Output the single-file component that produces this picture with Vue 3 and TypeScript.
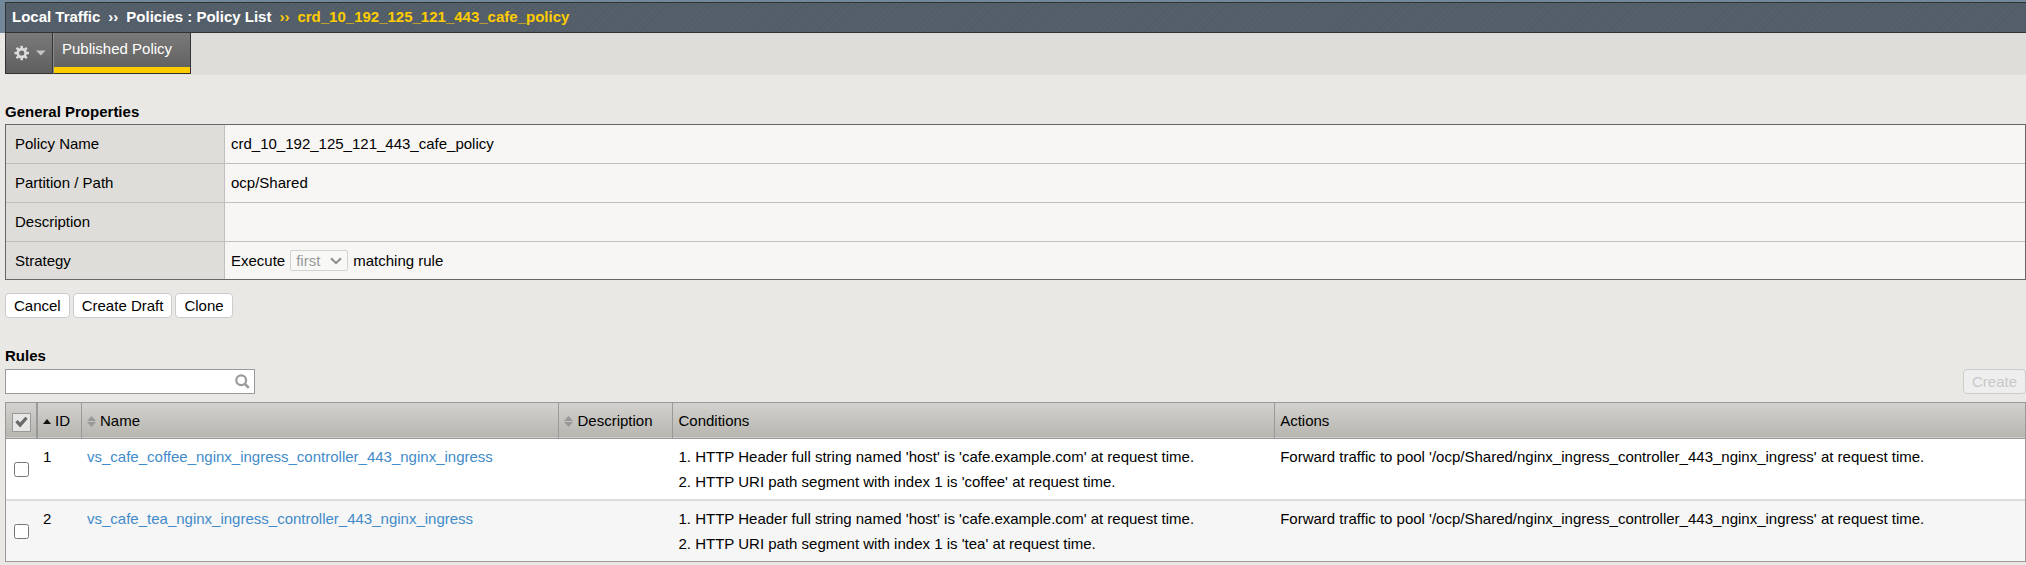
<script setup lang="ts">
import { ref } from 'vue'

interface Rule {
  id: number
  name: string
  conditions: string[]
  action: string
}

const policy = 'crd_10_192_125_121_443_cafe_policy'
const strategy = ref('first')
const filter = ref('')
const selected = ref<number[]>([])

const rules: Rule[] = [
  {
    id: 1,
    name: 'vs_cafe_coffee_nginx_ingress_controller_443_nginx_ingress',
    conditions: [
      "1. HTTP Header full string named 'host' is 'cafe.example.com' at request time.",
      "2. HTTP URI path segment with index 1 is 'coffee' at request time.",
    ],
    action: "Forward traffic to pool '/ocp/Shared/nginx_ingress_controller_443_nginx_ingress' at request time.",
  },
  {
    id: 2,
    name: 'vs_cafe_tea_nginx_ingress_controller_443_nginx_ingress',
    conditions: [
      "1. HTTP Header full string named 'host' is 'cafe.example.com' at request time.",
      "2. HTTP URI path segment with index 1 is 'tea' at request time.",
    ],
    action: "Forward traffic to pool '/ocp/Shared/nginx_ingress_controller_443_nginx_ingress' at request time.",
  },
]

function toggleAll(): void {
  selected.value = selected.value.length === rules.length ? [] : rules.map((r) => r.id)
}
</script>

<template>
  <div class="page">
    <header class="top">
      <nav class="crumbs" aria-label="Breadcrumb">
        <span>Local Traffic</span>
        <span>››</span>
        <span>Policies : Policy List</span>
        <span class="current">››</span>
        <span class="current">{{ policy }}</span>
      </nav>
    </header>

    <div class="tabbar">
      <button class="gear" type="button" aria-label="Preferences">
        <svg width="16" height="16" viewBox="0 0 16 16" aria-hidden="true">
          <g fill="#dcdcdc">
            <rect v-for="a in [0, 45, 90, 135]" :key="a" x="6.7" y="0.4" width="2.6" height="15.2" rx="0.6" :transform="`rotate(${a} 8 8)`" />
          </g>
          <circle cx="8" cy="8" r="4.1" fill="#6b6b6b" stroke="#dcdcdc" stroke-width="2.8" />
        </svg>
        <svg width="10" height="6" viewBox="0 0 10 6" aria-hidden="true"><path d="M0 0.5h10L5 5.7z" fill="#c4c4c4" /></svg>
      </button>
      <a class="tab" href="#">Published Policy</a>
    </div>

    <main>
      <h2 class="general">General Properties</h2>
      <table class="props">
        <colgroup><col class="label-col"><col></colgroup>
        <tbody>
          <tr><th scope="row">Policy Name</th><td>{{ policy }}</td></tr>
          <tr><th scope="row">Partition / Path</th><td>ocp/Shared</td></tr>
          <tr><th scope="row">Description</th><td></td></tr>
          <tr>
            <th scope="row"><label for="strategy">Strategy</label></th>
            <td>
              <div class="strategy">
                <span>Execute</span>
                <span class="select">
                  <select id="strategy" v-model="strategy" disabled>
                    <option value="first">first</option>
                  </select>
                  <svg width="12" height="8" viewBox="0 0 12 8" aria-hidden="true"><path d="M1 1.2l5 5 5-5" fill="none" stroke="#8c8c8c" stroke-width="2" /></svg>
                </span>
                <span>matching rule</span>
              </div>
            </td>
          </tr>
        </tbody>
      </table>

      <div class="buttons">
        <button class="btn" type="button">Cancel</button>
        <button class="btn" type="button">Create Draft</button>
        <button class="btn" type="button">Clone</button>
      </div>

      <h2 class="rules-title">Rules</h2>
      <div class="tools">
        <div class="search">
          <input v-model="filter" type="text" aria-label="Filter rules">
          <svg width="15" height="15" viewBox="0 0 15 15" aria-hidden="true">
            <circle cx="6.2" cy="6.2" r="4.9" fill="none" stroke="#9b9b9b" stroke-width="2.2" />
            <path d="M9.8 9.8l4 4" stroke="#9b9b9b" stroke-width="2.6" />
          </svg>
        </div>
        <button class="btn" type="button" disabled>Create</button>
      </div>

      <table class="rules">
        <colgroup>
          <col class="c-check"><col class="c-id"><col class="c-name"><col class="c-desc"><col class="c-cond"><col>
        </colgroup>
        <thead>
          <tr>
            <th class="check" scope="col">
              <button class="all" type="button" aria-label="Select all rules" @click="toggleAll">
                <svg width="13" height="12" viewBox="0 0 13 12" aria-hidden="true"><path d="M0.3 6.3L2.6 4l2.5 2.4L10.4 0.8l2.3 2L5.2 11.4z" fill="#686868" /></svg>
              </button>
            </th>
            <th scope="col">
              <span class="head"><svg width="8" height="7" viewBox="0 0 8 7" aria-hidden="true"><path d="M4 2l4 5H0z" fill="#111" /></svg>ID</span>
            </th>
            <th v-for="h in ['Name', 'Description']" :key="h" scope="col">
              <span class="head"><svg width="9" height="13" viewBox="0 0 9 13" aria-hidden="true"><path d="M4.5 2L9 7H0zM0 8h9L4.5 13z" fill="#999" /></svg>{{ h }}</span>
            </th>
            <th scope="col">Conditions</th>
            <th scope="col">Actions</th>
          </tr>
        </thead>
        <tbody>
          <tr v-for="r in rules" :key="r.id">
            <td class="check"><input v-model="selected" type="checkbox" :value="r.id" :aria-label="`Select rule ${r.id}`"></td>
            <td>{{ r.id }}</td>
            <td><a href="#">{{ r.name }}</a></td>
            <td></td>
            <td><div v-for="c in r.conditions" :key="c">{{ c }}</div></td>
            <td>{{ r.action }}</td>
          </tr>
        </tbody>
      </table>
    </main>
  </div>
</template>

<style>
body {
  background: #e9e8e4;
}
</style>

<style scoped>
.page {
  font: 15px/18px "Liberation Sans", Arial, sans-serif;
  color: #000;
}
.page * {
  box-sizing: border-box;
}
.top {
  background: #72879a;
  padding: 2px 0 0 5px;
}
.crumbs {
  display: flex;
  gap: 8px;
  height: 31px;
  padding: 5px 6px;
  border: 1px solid #333;
  border-right: 0;
  background: repeating-linear-gradient(135deg, #515d68 0 2px, #56606a 2px 4px);
  color: #fff;
  font-weight: bold;
  white-space: nowrap;
}
.current {
  color: #fc0;
}
.tabbar {
  display: flex;
  height: 42px;
  margin-left: 5px;
  background: #deddd9;
  border-bottom: 1px solid #e2e1dd;
}
.gear,
.tab {
  height: 41px;
  border: 1px solid #333;
  border-top: 0;
  background: linear-gradient(#7a7a7a, #5e5e5e);
}
.gear {
  display: flex;
  align-items: center;
  gap: 7px;
  width: 48px;
  padding: 0 6px 0 8px;
}
.tab {
  width: 138px;
  margin-right: auto;
  padding: 7px 8px;
  border-left: 1px solid #8c8c8c;
  box-shadow: inset 0 -6px #fc0;
  color: #fff;
  text-decoration: none;
  white-space: nowrap;
}
main {
  padding-left: 5px;
}
h2 {
  margin: 0;
  font-size: 15px;
  line-height: 18px;
}
.general {
  padding: 28px 0 3px;
}
table {
  width: 100%;
  table-layout: fixed;
  border-spacing: 0;
}
th,
td {
  text-align: left;
  font-weight: normal;
}
.props {
  border: 1px solid #666;
}
.label-col {
  width: 219px;
}
.props th,
.props td {
  height: 39px;
  padding: 0 6px;
  border-bottom: 1px solid #bfbfbb;
}
.props th {
  padding-left: 9px;
  background: #deddd9;
  border-right: 1px solid #bfbfbb;
}
.props td {
  background: #f7f6f4;
}
.props tr:last-child > * {
  height: 37px;
  border-bottom: 0;
}
.strategy {
  display: flex;
  align-items: center;
  gap: 5px;
}
.select {
  position: relative;
}
.select select {
  display: block;
  width: 58px;
  height: 21px;
  padding: 0 5px;
  border: 1px solid #d2d2d0;
  border-radius: 2px;
  background: #f8f8f7;
  color: #999;
  font: inherit;
  appearance: none;
  opacity: 1;
}
.select svg {
  position: absolute;
  top: 7px;
  right: 6px;
}
.buttons {
  display: flex;
  gap: 3px;
  padding-top: 13px;
}
.btn {
  height: 25px;
  padding: 0 8px;
  border: 1px solid #ccc;
  border-radius: 4px;
  background: #fff;
  color: #000;
  font: inherit;
}
.btn:disabled {
  background: #eee;
  color: #c9c9c9;
}
.rules-title {
  padding: 29px 0 4px;
}
.tools {
  display: flex;
  justify-content: space-between;
}
.search {
  position: relative;
}
.search input {
  display: block;
  width: 250px;
  height: 25px;
  padding: 0 28px 0 6px;
  border: 1px solid #999;
  background: #fff;
  font: inherit;
}
.search svg {
  position: absolute;
  top: 5px;
  right: 5px;
}
.rules {
  margin: 8px 0 3px;
  border: 1px solid #999;
}
.c-check {
  width: 32px;
}
.c-id {
  width: 44px;
}
.c-name {
  width: 23.65%;
}
.c-desc {
  width: 114px;
}
.c-cond {
  width: 29.8%;
}
.rules th {
  height: 36px;
  padding: 0 5px;
  border-right: 1px solid #999;
  border-bottom: 1px solid #999;
  background: linear-gradient(#d3d2ce, #b5b4af);
  box-shadow: inset 0 -1px #cfcecb;
}
.rules th:last-child {
  border-right: 0;
}
.rules th.check {
  padding: 0 0 0 6px;
  border-right-width: 2px;
}
.head {
  display: flex;
  align-items: center;
  gap: 4px;
}
.all {
  display: flex;
  align-items: center;
  justify-content: center;
  width: 19px;
  height: 19px;
  margin-top: 3px;
  padding: 0;
  border: 1px solid #999;
  background: #e6e6e5;
}
.rules td {
  height: 60px;
  padding: 5px;
  vertical-align: top;
  line-height: 25px;
  background: #fff;
}
.rules tbody tr:not(:last-child) td {
  height: 62px;
  border-bottom: 2px solid #ddd;
}
.rules tbody tr:last-child td {
  background: #f6f6f6;
}
.rules tbody td.check {
  padding: 0 0 0 8px;
  vertical-align: middle;
}
.rules input {
  display: block;
  width: 15px;
  height: 15px;
  margin: 0;
}
.rules a {
  color: #428bca;
  text-decoration: none;
}
</style>
